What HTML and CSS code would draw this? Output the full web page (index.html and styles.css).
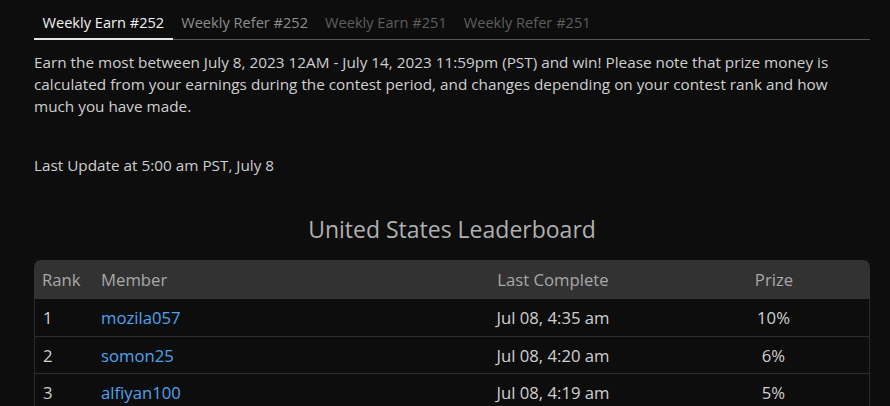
FILE: index.html
```html
<!DOCTYPE html>
<html lang="en">
<head>
<meta charset="utf-8">
<title>Leaderboard</title>
<link rel="stylesheet" href="styles.css">
</head>
<body>
<div class="page">
  <nav class="tabs">
    <a class="tab active">Weekly Earn #252</a>
    <a class="tab t2">Weekly Refer #252</a>
    <a class="tab t3">Weekly Earn #251</a>
    <a class="tab t3">Weekly Refer #251</a>
  </nav>
  <p class="intro">Earn the most between July 8, 2023 12AM - July 14, 2023 11:59pm (PST) and win! Please note that prize money is calculated from your earnings during the contest period, and changes depending on your contest rank and how much you have made.</p>
  <p class="update">Last Update at 5:00 am PST, July 8</p>
  <h2 class="title">United States Leaderboard</h2>
  <table class="board">
    <thead>
      <tr><th class="c-rank">Rank</th><th class="c-member">Member</th><th class="c-last">Last Complete</th><th class="c-prize">Prize</th></tr>
    </thead>
    <tbody>
      <tr><td class="c-rank">1</td><td class="c-member"><a class="user">mozila057</a></td><td class="c-last">Jul 08, 4:35 am</td><td class="c-prize">10%</td></tr>
      <tr><td class="c-rank">2</td><td class="c-member"><a class="user">somon25</a></td><td class="c-last">Jul 08, 4:20 am</td><td class="c-prize">6%</td></tr>
      <tr><td class="c-rank">3</td><td class="c-member"><a class="user">alfiyan100</a></td><td class="c-last">Jul 08, 4:19 am</td><td class="c-prize">5%</td></tr>
    </tbody>
  </table>
</div>
</body>
</html>
```
FILE: styles.css
```css
html, body {
  margin: 0;
  padding: 0;
  background: #0d0d0d;
  overflow: hidden;
}
body {
  font-family: "Open Sans", "Liberation Sans", sans-serif;
  color: #cfcfcf;
  font-size: 15.3px;
}
.page {
  width: 836px;
  margin: 0 0 0 34px;
  padding-top: 8px;
}
.tabs {
  display: flex;
  border-bottom: 1px solid #555;
  height: 31px;
}
.tab {
  padding: 0 8.5px;
  line-height: 29px;
  font-size: 14.6px;
  color: #8e8e8e;
  border-bottom: 2px solid transparent;
  margin-bottom: -1px;
}
.tab.active {
  color: #f2f2f2;
  border-bottom-color: #e6e6e6;
}
.tab.t3 {
  color: #5e5e5e;
}
.intro {
  margin: 11px 0 0;
  line-height: 22px;
}
.update {
  margin: 37px 0 0;
  line-height: 22px;
}
.title {
  margin: 37px 0 0;
  text-align: center;
  font-weight: 400;
  font-size: 23px;
  line-height: 32px;
  color: #b0b0b0;
}
.board {
  margin-top: 15px;
  width: 836px;
  border-collapse: separate;
  border-spacing: 0;
  table-layout: fixed;
  font-size: 16.7px;
}
.board th {
  background: #323232;
  color: #a8a8a8;
  font-weight: 400;
  height: 39px;
  padding: 0 8px;
  text-align: left;
}
.board th:first-child { border-top-left-radius: 7px; }
.board th:last-child { border-top-right-radius: 7px; }
.board td {
  height: 36px;
  padding: 0 8px;
  border-top: 1px solid #2e2e2e;
  color: #d0d0d0;
}
.board tbody tr:first-child td { border-top: none; height: 37px; }
.board td:first-child { border-left: 1px solid #2a2a2a; }
.board td:last-child { border-right: 1px solid #2a2a2a; }
.c-rank { width: 43px; }
.c-member { width: 319px; }
.c-last { width: 234px; text-align: center !important; }
.c-prize { text-align: center !important; }
.user { color: #4ea3ee; }
```
